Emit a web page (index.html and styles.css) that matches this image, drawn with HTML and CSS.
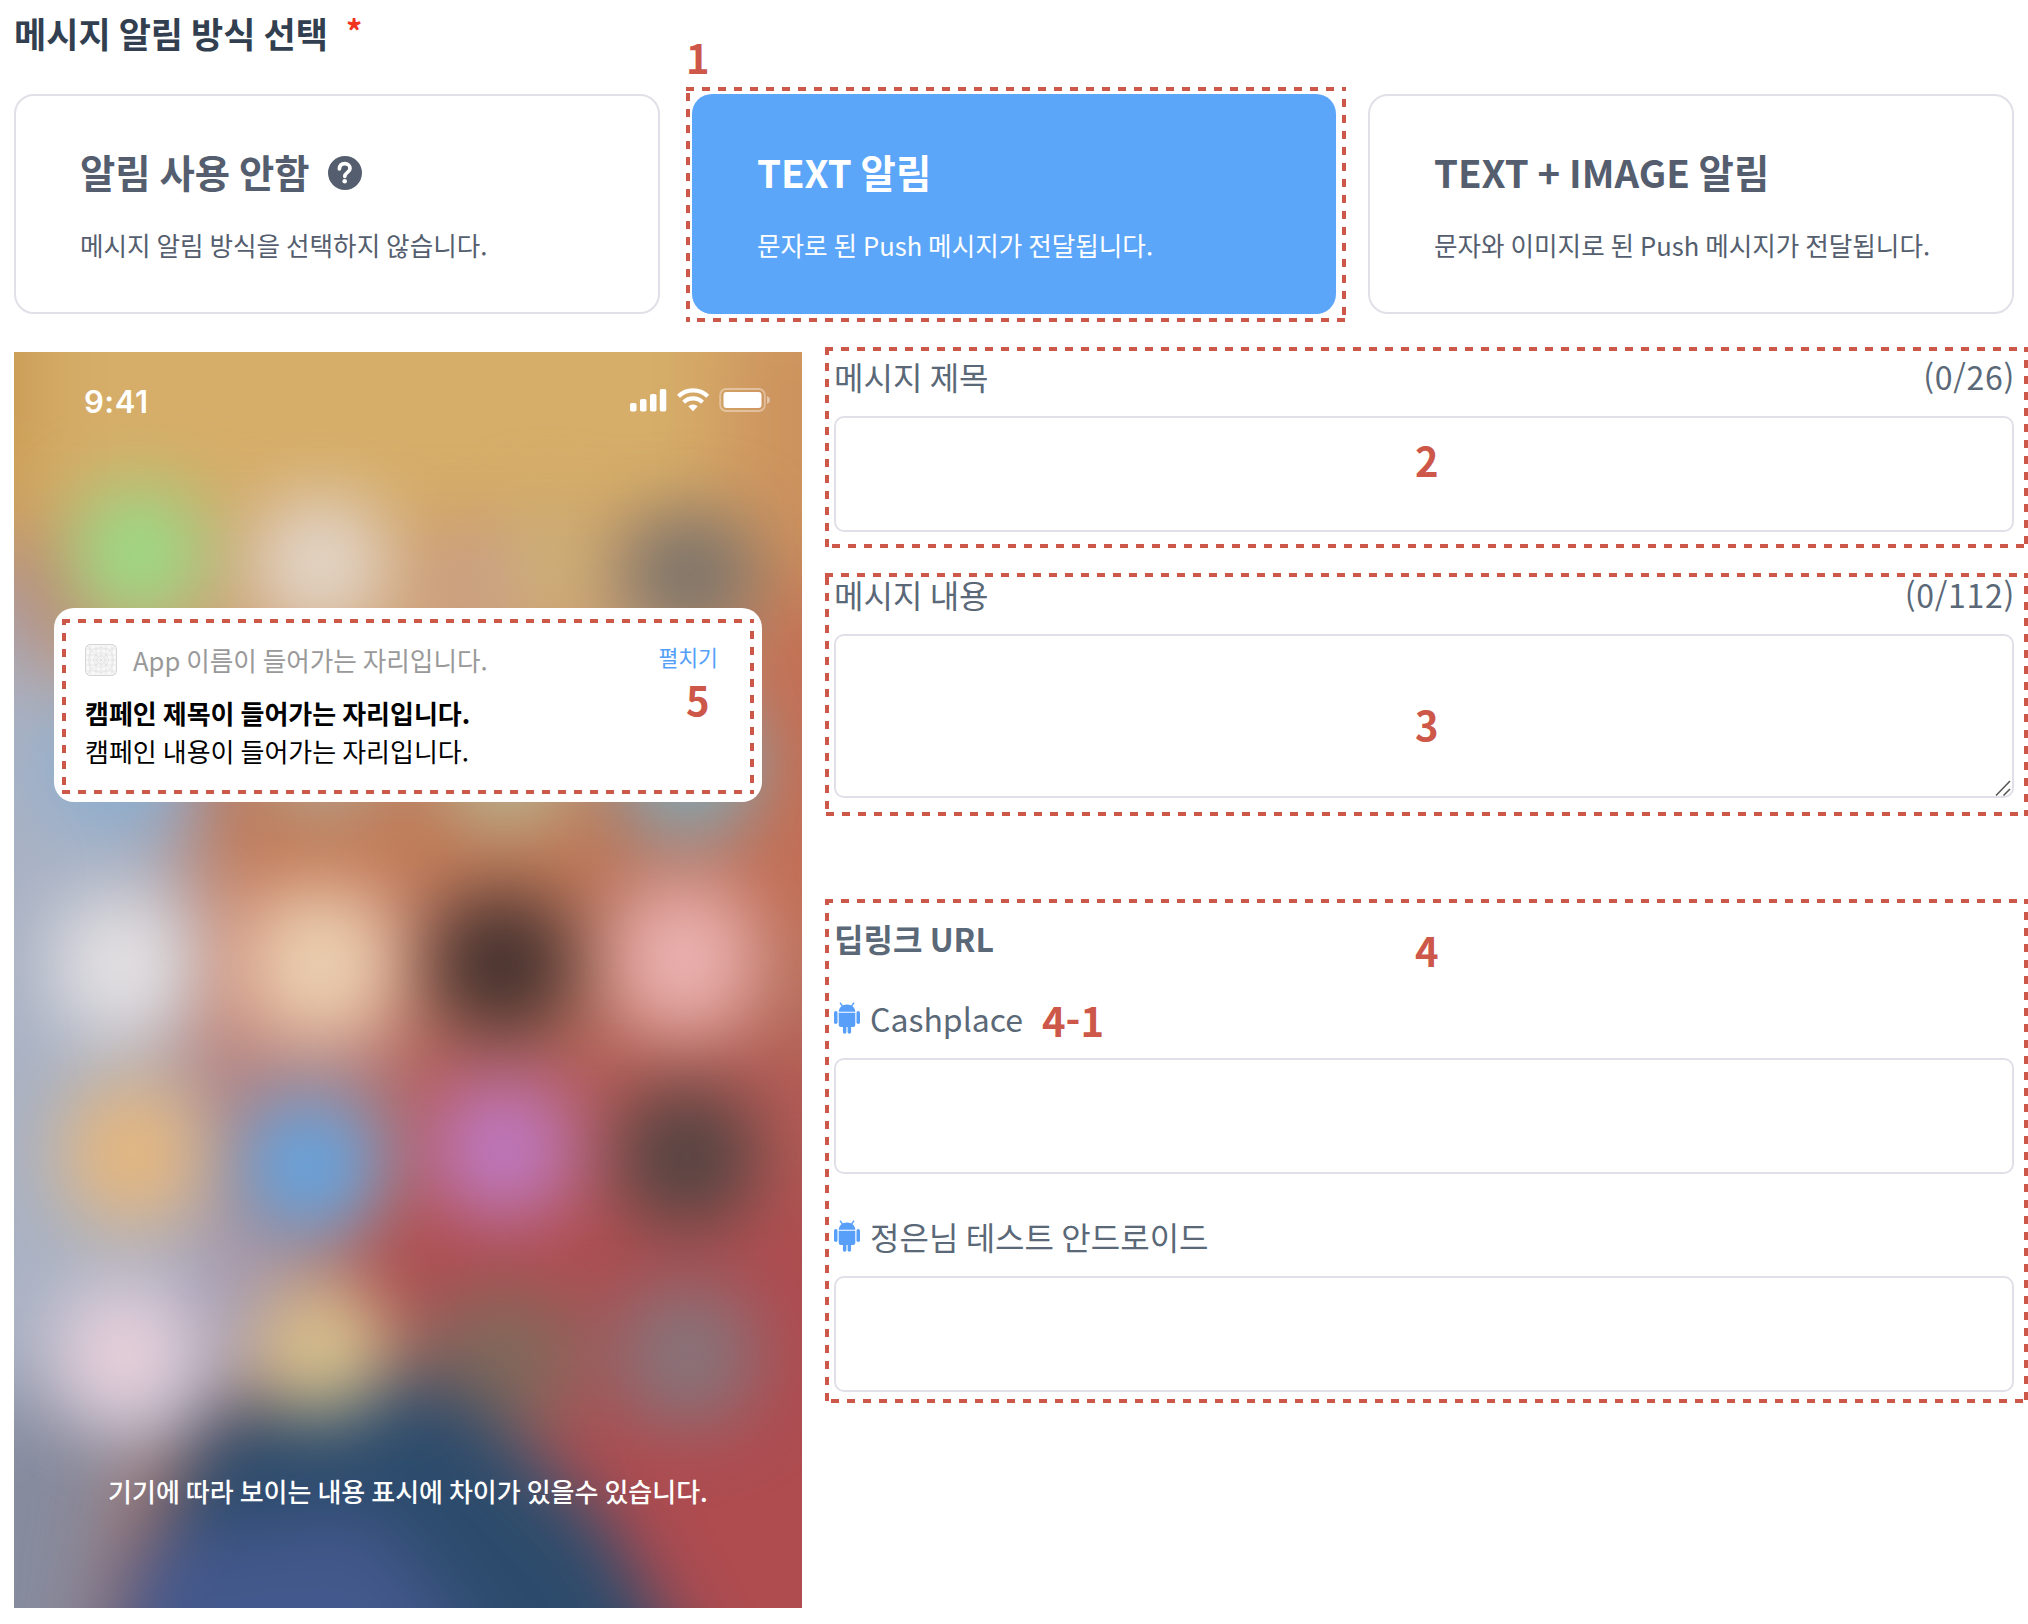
FILE: index.html
```html
<!DOCTYPE html>
<html lang="ko">
<head>
<meta charset="utf-8">
<title>메시지 알림 방식 선택</title>
<link rel="stylesheet" href="styles.css">
</head>
<body>
<svg class="defs" width="0" height="0" aria-hidden="true">
  <symbol id="android" viewBox="0 0 26 32">
    <path d="M6 .6l2.400 3.400M20 .6L17.600 4" stroke="currentColor" stroke-width="1.400" fill="none"/>
    <path d="M4.700 9.700C4.900 5.600 8 2.400 13 2.400s8.100 3.200 8.300 7.300z"/>
    <path d="M4.700 10.700h16.600v12.100a2.200 2.200 0 0 1-2.200 2.200H17.100v5.100a1.750 1.750 0 0 1-3.500 0V25h-1.200v5.100a1.750 1.750 0 0 1-3.500 0V25H6.900a2.200 2.200 0 0 1-2.200-2.200z"/>
    <rect x="0" y="9" width="3.500" height="13" rx="1.750"/>
    <rect x="22.500" y="9" width="3.500" height="13" rx="1.750"/>
  </symbol>
</svg>
<main class="page">
  <h1 class="heading">메시지 알림 방식 선택<span class="required">*</span></h1>

  <section class="options">
    <div class="option">
      <h2 class="option-title">알림 사용 안함
        <svg class="help" viewBox="0 0 34 34"><circle cx="17" cy="17" r="17" fill="currentColor"/><path d="M11.400 12.900c.2-3.300 2.300-5.200 5.400-5.200 3.100 0 5.200 1.900 5.200 4.700 0 4-5 3.900-5.200 7.900" fill="none" stroke="#fff" stroke-width="3.700" stroke-linecap="round"/><circle cx="16.700" cy="25.300" r="2.300" fill="#fff"/></svg>
      </h2>
      <p class="option-text">메시지 알림 방식을 선택하지 않습니다.</p>
    </div>
    <div class="option selected">
      <h2 class="option-title">TEXT 알림</h2>
      <p class="option-text">문자로 된 Push 메시지가 전달됩니다.</p>
    </div>
    <div class="option">
      <h2 class="option-title">TEXT + IMAGE 알림</h2>
      <p class="option-text">문자와 이미지로 된 Push 메시지가 전달됩니다.</p>
    </div>
  </section>

  <section class="content">
    <div class="phone">
      <svg class="wallpaper" viewBox="11 272 609 972" preserveAspectRatio="none">
        <defs>
          <filter id="soft" x="-30%" y="-30%" width="160%" height="160%" color-interpolation-filters="sRGB"><feGaussianBlur stdDeviation="34"/></filter>
          <filter id="blob" x="-100%" y="-100%" width="300%" height="300%" color-interpolation-filters="sRGB"><feGaussianBlur stdDeviation="27"/></filter>
        </defs>
        <rect x="11" y="272" width="609" height="972" fill="#b8735f"/>
        <g filter="url(#soft)">
          <path d="M-90 150H720V420H-90z" fill="#d6ae69"/>
          <path d="M-90 200H20V380H-90z" fill="#c6964f"/>
          <path d="M-90 440H20V1400H-90z" fill="#a9b1c0"/>
          <path d="M-90 510H70L150 640 125 800 200 1000 170 1120H-90z" fill="#a9b2c4"/>
          <path d="M60 430H560V540H60z" fill="#cfa477"/>
          <path d="M560 230H720V480H560z" fill="#cd925e"/>
          <path d="M560 460H720V720H560z" fill="#c36f55"/>
          <path d="M170 600H480V690H170z" fill="#c17a54"/>
          <path d="M150 690H310V810H150z" fill="#d59a86"/>
          <path d="M140 800H300V900H140z" fill="#b08284"/>
          <path d="M300 800H720V1000H300z" fill="#b35a55"/>
          <path d="M300 930H720V1400H480L400 1110 240 1000z" fill="#ae4c50"/>
          <path d="M140 940H240V1080H140z" fill="#a69cb2"/>
          <path d="M-90 1080H110L70 1400H-90z" fill="#868b9e"/>
          <path d="M290 1010H470V1090H290z" fill="#99605c"/>
        </g>
        <g filter="url(#blob)">
          <path d="M100 1340L130 1150 165 1095 230 1080 345 1060 400 1110 470 1180 560 1340z" fill="#2c4b6c"/>
          <path d="M60 1360L105 1190 290 1170 430 1360z" fill="#43588c"/>
          <rect x="55" y="376" width="104" height="102" rx="40" fill="#9cd984"/>
          <rect x="196" y="384" width="104" height="102" rx="40" fill="#e2d5c7"/>
          <rect x="340" y="416" width="60" height="66" rx="24" fill="#c99f8c"/>
          <rect x="395" y="392" width="60" height="80" rx="24" fill="#ccb277"/>
          <rect x="481" y="396" width="104" height="96" rx="40" fill="#7d746a"/>
          <rect x="40" y="540" width="110" height="100" rx="40" fill="#88afd3"/>
          <rect x="200" y="540" width="100" height="90" rx="40" fill="#b6a58d"/>
          <rect x="340" y="540" width="104" height="100" rx="40" fill="#b8b490"/>
          <rect x="480" y="540" width="104" height="106" rx="40" fill="#83a7b2"/>
          <rect x="42" y="692" width="104" height="110" rx="40" fill="#e3e0e2"/>
          <rect x="198" y="694" width="100" height="104" rx="40" fill="#ebd0b0"/>
          <rect x="335" y="693" width="106" height="106" rx="40" fill="#46332f"/>
          <rect x="476" y="684" width="106" height="114" rx="40" fill="#ebb1b0"/>
          <rect x="49" y="836" width="106" height="112" rx="40" fill="#e3b680"/>
          <rect x="186" y="850" width="106" height="104" rx="40" fill="#66a2dc"/>
          <rect x="336" y="836" width="106" height="106" rx="40" fill="#bd77bd"/>
          <rect x="478" y="842" width="106" height="106" rx="40" fill="#554442"/>
          <rect x="44" y="994" width="104" height="108" rx="40" fill="#e6cfda"/>
          <rect x="198" y="994" width="98" height="100" rx="40" fill="#d7c08c"/>
          <rect x="340" y="1008" width="98" height="84" rx="40" fill="#80695a"/>
          <rect x="478" y="994" width="106" height="108" rx="40" fill="#877379"/>
        </g>
      </svg>
      <div class="statusbar">
        <span class="clock">9:41</span>
        <svg class="status-icons" viewBox="0 0 141 24">
          <g fill="#fff">
            <rect x="0" y="15" width="6.500" height="8.500" rx="1.800"/>
            <rect x="10" y="11" width="6.500" height="12.500" rx="1.800"/>
            <rect x="20" y="6" width="6.500" height="17.500" rx="1.800"/>
            <rect x="29.800" y="1" width="6.500" height="22.500" rx="1.800"/>
            <path d="M67.700 18.300l-4.700 4.900-4.700-4.900a7 7 0 0 1 9.400 0z"/>
            <rect x="93.500" y="4" width="38" height="16" rx="3"/>
          </g>
          <path d="M48.500 8.300a21 21 0 0 1 29.200 0M53.700 14.200a13.500 13.500 0 0 1 18.800 0" fill="none" stroke="#fff" stroke-width="4.200"/>
          <rect x="90.200" y="1" width="44.600" height="22" rx="6" fill="none" stroke="#fff" stroke-opacity=".38" stroke-width="1.800"/>
          <path d="M137 8c2 .8 3 2.400 3 4s-1 3.200-3 4z" fill="#fff" fill-opacity=".45"/>
        </svg>
      </div>
      <div class="notice">
        <div class="notice-head">
          <svg class="app-icon" viewBox="0 0 32 32" fill="none" stroke="#dedede" stroke-width=".6">
            <rect x=".5" y=".5" width="31" height="31" rx="5" fill="#f8f8f8" stroke="#d4d4d4" stroke-width="1"/>
            <path d="M5 0v32M11 0v32M16 0v32M21 0v32M27 0v32M0 5h32M0 11h32M0 16h32M0 21h32M0 27h32M1.500 1.500l29 29M30.500 1.500l-29 29"/>
            <circle cx="16" cy="16" r="12.500"/><circle cx="16" cy="16" r="7.500"/><circle cx="16" cy="16" r="4"/>
          </svg>
          <span class="app-name">App 이름이 들어가는 자리입니다.</span>
          <span class="expand">펼치기</span>
        </div>
        <p class="notice-title">캠페인 제목이 들어가는 자리입니다.</p>
        <p class="notice-text">캠페인 내용이 들어가는 자리입니다.</p>
      </div>
      <p class="phone-note">기기에 따라 보이는 내용 표시에 차이가 있을수 있습니다.</p>
    </div>

    <form class="form">
      <div class="field">
        <div class="label"><span>메시지 제목</span><span class="count">(0/26)</span></div>
        <input class="input" type="text" aria-label="메시지 제목">
      </div>
      <div class="field">
        <div class="label"><span>메시지 내용</span><span class="count">(0/112)</span></div>
        <div class="area">
          <textarea class="input textarea" aria-label="메시지 내용"></textarea>
          <svg class="grip" viewBox="0 0 16 16"><path d="M1 15.500L15 1M8.500 15.500L15 9" stroke="#555" stroke-width="1.500" fill="none"/></svg>
        </div>
      </div>
      <h2 class="group-title">딥링크 URL</h2>
      <div class="field">
        <div class="label app"><svg class="android"><use href="#android"/></svg><span>Cashplace</span></div>
        <input class="input" type="text" aria-label="Cashplace">
      </div>
      <div class="field">
        <div class="label app"><svg class="android"><use href="#android"/></svg><span>정은님 테스트 안드로이드</span></div>
        <input class="input" type="text" aria-label="정은님 테스트 안드로이드">
      </div>
    </form>
  </section>

  <div class="outline o1"></div><b class="mark m1">1</b>
  <div class="outline o2"></div><b class="mark m2">2</b>
  <div class="outline o3"></div><b class="mark m3">3</b>
  <div class="outline o4"></div><b class="mark m4">4</b>
  <b class="mark m41">4-1</b>
  <div class="outline o5"></div><b class="mark m5">5</b>
</main>
</body>
</html>
```
FILE: styles.css
```css
* { box-sizing: border-box; }

body {
  margin: 0;
  background: #fff;
  font-family: "Noto Sans CJK KR", "Noto Sans", sans-serif;
}

h1, h2, p, span { word-spacing: -.05em; }

h1, h2, p { margin: 0; }

.defs { position: absolute; }

.page {
  position: relative;
  width: 2028px;
  height: 1624px;
  padding: 7px 14px 0;
  overflow: hidden;
}

.heading {
  display: flex;
  gap: 18px;
  height: 52px;
  margin-bottom: 35px;
  font-size: 35px;
  line-height: 52px;
  font-weight: 700;
  color: #323f50;
}

.required {
  font-size: 32px;
  line-height: 46px;
  color: #f0321e;
}

/* Notification type cards */
.options {
  display: grid;
  grid-template-columns: repeat(3, 646px);
  gap: 31px;
}

.option {
  height: 220px;
  padding: 47px 64px 0;
  border: 2px solid #e0e0e8;
  border-radius: 20px;
  color: #545e6e;
}

.option.selected {
  margin: 0 1px;
  padding: 49px 65px 0;
  border: 0;
  background: #5ca6f9;
  color: #fff;
}

.option-title {
  display: flex;
  align-items: center;
  gap: 18px;
  margin-bottom: 28px;
  font-size: 38.4px;
  line-height: 56px;
  font-weight: 700;
}

.help {
  width: 34px;
  height: 34px;
  margin-top: 4px;
}

.option-text {
  font-size: 25.6px;
  line-height: 36px;
}

.content {
  display: flex;
  gap: 32px;
  margin-top: 38px;
}

/* Phone preview */
.phone {
  position: relative;
  display: flex;
  flex-direction: column;
  width: 788px;
  height: 1256px;
  padding: 36px 31px 97px 40px;
  overflow: hidden;
}

.wallpaper {
  position: absolute;
  inset: 0;
  width: 100%;
  height: 100%;
}

.statusbar {
  position: relative;
  display: flex;
  justify-content: space-between;
  height: 24px;
  padding-left: 30px;
}

.clock {
  font: 600 31px/28px Inter, "Liberation Sans", sans-serif;
  letter-spacing: .5px;
  color: #fff;
}

.status-icons {
  width: 141px;
  height: 24px;
}

.notice {
  position: relative;
  width: 708px;
  height: 194px;
  margin-top: 196px;
  padding: 35px 44px 0 31px;
  border-radius: 20px;
  background: #fff;
  font-size: 26px;
  line-height: 38px;
  color: #000;
}

.notice-head {
  display: flex;
  align-items: center;
  height: 34px;
  margin-bottom: 17px;
}

.app-icon {
  width: 32px;
  height: 32px;
}

.app-name {
  margin-left: 16px;
  font-size: 25.6px;
  color: #999;
}

.expand {
  margin: -7px 0 0 auto;
  font-size: 21.6px;
  color: #549ff8;
}

.notice-title { font-weight: 700; }

.phone-note {
  position: relative;
  margin: auto 9px 0 0;
  font-size: 26px;
  line-height: 40px;
  font-weight: 500;
  text-align: center;
  color: #fff;
}

/* Form column */
.form { width: 1180px; }

.field { margin-bottom: 38px; }

.label {
  display: flex;
  justify-content: space-between;
  height: 48px;
  margin-bottom: 16px;
  font-size: 32px;
  line-height: 48px;
  color: #5a6877;
}

.label.app {
  justify-content: flex-start;
  gap: 10px;
}

.count {
  margin-right: -1px;
  letter-spacing: .7px;
}

.android {
  width: 26px;
  height: 32px;
  margin-top: 8px;
  color: #589ffa;
  fill: currentColor;
}

.input {
  display: block;
  width: 100%;
  height: 116px;
  border: 2px solid #e0e0e8;
  border-radius: 10px;
  background: #fff;
  font: inherit;
}

.area { position: relative; }

.textarea {
  height: 164px;
  resize: none;
}

.grip {
  position: absolute;
  right: 3px;
  bottom: 2px;
  width: 16px;
  height: 16px;
}

.group-title {
  margin: 116px 0 32px;
  font-size: 32px;
  line-height: 48px;
  font-weight: 700;
  color: #5a6877;
}

/* Numbered call-outs laid over the screen; --t/--r/--b/--l shift the dashes of each side */
.outline {
  --c: #cd5748;
  --h: linear-gradient(90deg, var(--c) 50%, transparent 50%);
  --v: linear-gradient(180deg, var(--c) 50%, transparent 50%);
  position: absolute;
  background:
    var(--h) var(--t) 0 / 16px 4px repeat-x,
    var(--h) var(--b) 100% / 16px 4px repeat-x,
    var(--v) 0 var(--l) / 4px 16px repeat-y,
    var(--v) 100% var(--r) / 4px 16px repeat-y;
  pointer-events: none;
}

.o1 { left: 686px; top: 87px; width: 660px; height: 235px; --t: 0px; --r: 12px; --b: 11px; --l: 6px; }
.o2 { left: 825px; top: 347px; width: 1203px; height: 201px; --t: 0px; --r: 13px; --b: 7px; --l: 0px; }
.o3 { left: 825px; top: 573px; width: 1203px; height: 243px; --t: 0px; --r: 13px; --b: 1px; --l: 4px; }
.o4 { left: 825px; top: 899px; width: 1203px; height: 504px; --t: 0px; --r: 13px; --b: 6px; --l: 14px; }
.o5 { left: 62px; top: 619px; width: 692px; height: 175px; --t: 0px; --r: 12px; --b: 0px; --l: 14px; }

.mark {
  position: absolute;
  font-size: 40px;
  line-height: 40px;
  font-weight: 700;
  color: #cd5748;
}

.m1 { left: 686px; top: 37px; }
.m2 { left: 1415px; top: 440px; }
.m3 { left: 1415px; top: 704px; }
.m4 { left: 1415px; top: 930px; }
.m41 { left: 1042px; top: 1000px; }
.m5 { left: 686px; top: 679px; }
```
